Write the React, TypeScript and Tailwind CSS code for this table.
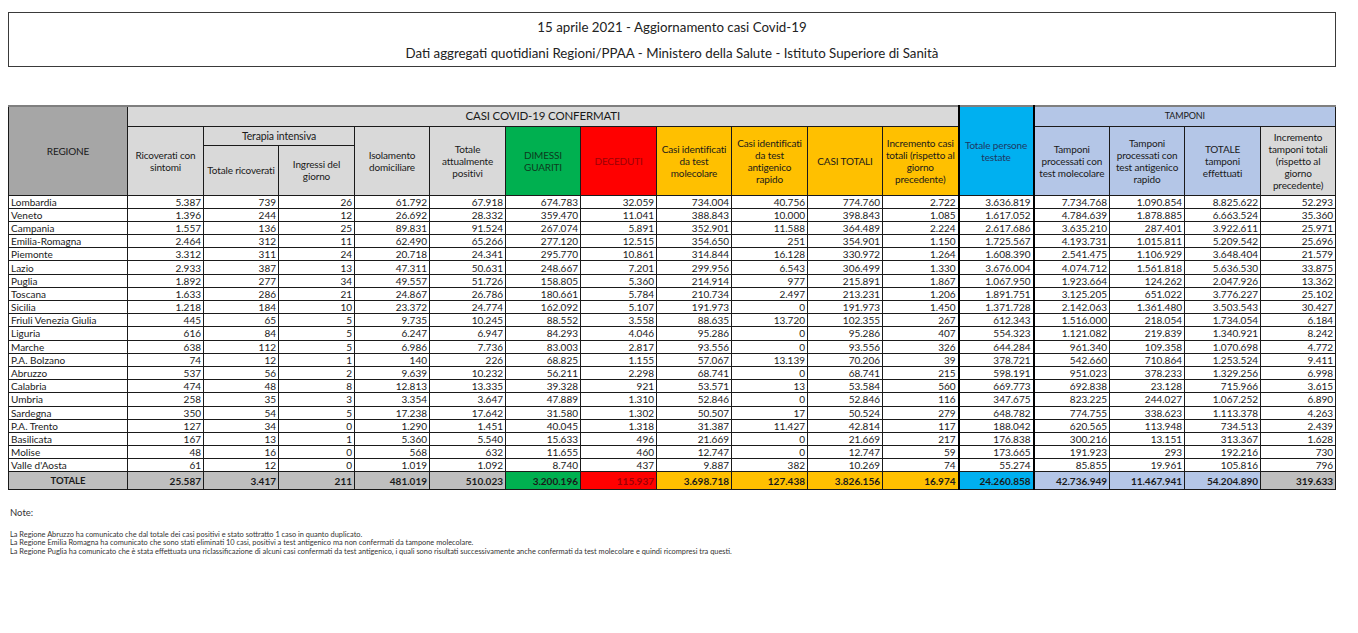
import React from "react";

type Row = [string, ...string[]];

const rows: Row[] = [
  ["Lombardia", "5.387", "739", "26", "61.792", "67.918", "674.783", "32.059", "734.004", "40.756", "774.760", "2.722", "3.636.819", "7.734.768", "1.090.854", "8.825.622", "52.293"],
  ["Veneto", "1.396", "244", "12", "26.692", "28.332", "359.470", "11.041", "388.843", "10.000", "398.843", "1.085", "1.617.052", "4.784.639", "1.878.885", "6.663.524", "35.360"],
  ["Campania", "1.557", "136", "25", "89.831", "91.524", "267.074", "5.891", "352.901", "11.588", "364.489", "2.224", "2.617.686", "3.635.210", "287.401", "3.922.611", "25.971"],
  ["Emilia-Romagna", "2.464", "312", "11", "62.490", "65.266", "277.120", "12.515", "354.650", "251", "354.901", "1.150", "1.725.567", "4.193.731", "1.015.811", "5.209.542", "25.696"],
  ["Piemonte", "3.312", "311", "24", "20.718", "24.341", "295.770", "10.861", "314.844", "16.128", "330.972", "1.264", "1.608.390", "2.541.475", "1.106.929", "3.648.404", "21.579"],
  ["Lazio", "2.933", "387", "13", "47.311", "50.631", "248.667", "7.201", "299.956", "6.543", "306.499", "1.330", "3.676.004", "4.074.712", "1.561.818", "5.636.530", "33.875"],
  ["Puglia", "1.892", "277", "34", "49.557", "51.726", "158.805", "5.360", "214.914", "977", "215.891", "1.867", "1.067.950", "1.923.664", "124.262", "2.047.926", "13.362"],
  ["Toscana", "1.633", "286", "21", "24.867", "26.786", "180.661", "5.784", "210.734", "2.497", "213.231", "1.206", "1.891.751", "3.125.205", "651.022", "3.776.227", "25.102"],
  ["Sicilia", "1.218", "184", "10", "23.372", "24.774", "162.092", "5.107", "191.973", "0", "191.973", "1.450", "1.371.728", "2.142.063", "1.361.480", "3.503.543", "30.427"],
  ["Friuli Venezia Giulia", "445", "65", "5", "9.735", "10.245", "88.552", "3.558", "88.635", "13.720", "102.355", "267", "612.343", "1.516.000", "218.054", "1.734.054", "6.184"],
  ["Liguria", "616", "84", "5", "6.247", "6.947", "84.293", "4.046", "95.286", "0", "95.286", "407", "554.323", "1.121.082", "219.839", "1.340.921", "8.242"],
  ["Marche", "638", "112", "5", "6.986", "7.736", "83.003", "2.817", "93.556", "0", "93.556", "326", "644.284", "961.340", "109.358", "1.070.698", "4.772"],
  ["P.A. Bolzano", "74", "12", "1", "140", "226", "68.825", "1.155", "57.067", "13.139", "70.206", "39", "378.721", "542.660", "710.864", "1.253.524", "9.411"],
  ["Abruzzo", "537", "56", "2", "9.639", "10.232", "56.211", "2.298", "68.741", "0", "68.741", "215", "598.191", "951.023", "378.233", "1.329.256", "6.998"],
  ["Calabria", "474", "48", "8", "12.813", "13.335", "39.328", "921", "53.571", "13", "53.584", "560", "669.773", "692.838", "23.128", "715.966", "3.615"],
  ["Umbria", "258", "35", "3", "3.354", "3.647", "47.889", "1.310", "52.846", "0", "52.846", "116", "347.675", "823.225", "244.027", "1.067.252", "6.890"],
  ["Sardegna", "350", "54", "5", "17.238", "17.642", "31.580", "1.302", "50.507", "17", "50.524", "279", "648.782", "774.755", "338.623", "1.113.378", "4.263"],
  ["P.A. Trento", "127", "34", "0", "1.290", "1.451", "40.045", "1.318", "31.387", "11.427", "42.814", "117", "188.042", "620.565", "113.948", "734.513", "2.439"],
  ["Basilicata", "167", "13", "1", "5.360", "5.540", "15.633", "496", "21.669", "0", "21.669", "217", "176.838", "300.216", "13.151", "313.367", "1.628"],
  ["Molise", "48", "16", "0", "568", "632", "11.655", "460", "12.747", "0", "12.747", "59", "173.665", "191.923", "293", "192.216", "730"],
  ["Valle d'Aosta", "61", "12", "0", "1.019", "1.092", "8.740", "437", "9.887", "382", "10.269", "74", "55.274", "85.855", "19.961", "105.816", "796"],
];

const totals = ["25.587", "3.417", "211", "481.019", "510.023", "3.200.196", "115.937", "3.698.718", "127.438", "3.826.156", "16.974", "24.260.858", "42.736.949", "11.467.941", "54.204.890", "319.633"];

// background of each column in the TOTALE row
const totalBg = [
  "bg-[#bfbfbf]", "bg-[#bfbfbf]", "bg-[#bfbfbf]", "bg-[#bfbfbf]", "bg-[#bfbfbf]",
  "bg-[#00b050]", "bg-[#ff0000] text-[#9c0006]", "bg-[#ffc000]", "bg-[#ffc000]", "bg-[#ffc000]", "bg-[#ffc000]",
  "bg-[#00b0f0]", "bg-[#b4c6e7]", "bg-[#b4c6e7]", "bg-[#b4c6e7]", "bg-[#bfbfbf]",
];

const colWidths = [119, 76, 75, 76, 75, 76, 75, 76, 75, 76, 75, 76, 75, 76, 75, 76, 75];

const th = "border border-[#1a1a1a] px-0 text-center align-middle font-normal leading-[12px] tracking-[-0.15px]";

export default function App() {
  return (
    <div
      className="w-[1358px] h-[633px] bg-white text-[#1a1a1a] pt-[12px]"
      style={{ fontFamily: "Lato, 'Open Sans', sans-serif" }}
    >
      <div className="mx-[8px] w-[1328px] h-[55px] border border-[#3a3a3a] flex flex-col items-center text-[13.3px] text-[#222]">
        <div className="mt-[6px] leading-[16px]">15 aprile 2021 - Aggiornamento casi Covid-19</div>
        <div className="mt-[10px] leading-[16px]">
          Dati aggregati quotidiani Regioni/PPAA - Ministero della Salute - Istituto Superiore di Sanità
        </div>
      </div>

      <table className="ml-[8px] mt-[38px] table-fixed border-collapse text-[10px] w-[1327px]">
        <colgroup>
          {colWidths.map((w, i) => (
            <col key={i} style={{ width: w }} />
          ))}
        </colgroup>
        <thead>
          <tr className="h-[20px] border-t-2 border-t-[#7f7f7f]">
            <th rowSpan={3} className={`${th} bg-[#a6a6a6] font-bold`}>REGIONE</th>
            <th colSpan={11} className={`${th} bg-[#d9d9d9] font-bold text-[11.5px]`}>CASI COVID-19 CONFERMATI</th>
            <th rowSpan={3} className={`${th} bg-[#00b0f0] text-[#1f3864] border-x-2 border-x-black`}>
              Totale persone
              <br />
              testate
            </th>
            <th colSpan={4} className={`${th} bg-[#b4c6e7] font-bold text-[9px]`}>TAMPONI</th>
          </tr>
          <tr className="h-[19px]">
            <th rowSpan={2} className={`${th} bg-[#d9d9d9]`}>Ricoverati con<br />sintomi</th>
            <th colSpan={2} className={`${th} bg-[#d9d9d9] text-[10.5px]`}>Terapia intensiva</th>
            <th rowSpan={2} className={`${th} bg-[#d9d9d9]`}>Isolamento<br />domiciliare</th>
            <th rowSpan={2} className={`${th} bg-[#d9d9d9]`}>Totale<br />attualmente<br />positivi</th>
            <th rowSpan={2} className={`${th} bg-[#00b050] text-[#0d3b1e]`}>DIMESSI<br />GUARITI</th>
            <th rowSpan={2} className={`${th} bg-[#ff0000] text-[#9c0006]`}>DECEDUTI</th>
            <th rowSpan={2} className={`${th} bg-[#ffc000]`}>Casi identificati<br />da test<br />molecolare</th>
            <th rowSpan={2} className={`${th} bg-[#ffc000]`}>Casi identificati<br />da test<br />antigenico<br />rapido</th>
            <th rowSpan={2} className={`${th} bg-[#ffc000]`}>CASI TOTALI</th>
            <th rowSpan={2} className={`${th} bg-[#ffc000] whitespace-nowrap`}>Incremento casi<br />totali (rispetto al<br />giorno<br />precedente)</th>
            <th rowSpan={2} className={`${th} bg-[#b4c6e7]`}>Tamponi<br />processati con<br />test molecolare</th>
            <th rowSpan={2} className={`${th} bg-[#b4c6e7]`}>Tamponi<br />processati con<br />test antigenico<br />rapido</th>
            <th rowSpan={2} className={`${th} bg-[#b4c6e7]`}>TOTALE<br />tamponi<br />effettuati</th>
            <th rowSpan={2} className={`${th} bg-[#d9d9d9]`}>Incremento<br />tamponi totali<br />(rispetto al<br />giorno<br />precedente)</th>
          </tr>
          <tr className="h-[50px]">
            <th className={`${th} bg-[#d9d9d9] whitespace-nowrap`}>Totale ricoverati</th>
            <th className={`${th} bg-[#d9d9d9]`}>Ingressi del<br />giorno</th>
          </tr>
        </thead>
        <tbody>
          {rows.map((r) => (
            <tr key={r[0]} className="h-[13.2px]">
              {r.map((v, i) => (
                <td
                  key={i}
                  className={`border border-[#1a1a1a] px-[2px] py-0 leading-[12px] whitespace-nowrap ${
                    i === 0 ? "text-left" : "text-right"
                  } ${i === 12 ? "border-x-2 border-x-black" : ""}`}
                >
                  {v}
                </td>
              ))}
            </tr>
          ))}
          <tr className="h-[18px] font-bold">
            <td className="border border-[#1a1a1a] bg-[#bfbfbf] text-center text-[9.5px]">TOTALE</td>
            {totals.map((v, i) => (
              <td
                key={i}
                className={`border border-[#1a1a1a] px-[2px] text-right leading-[12px] ${totalBg[i]} ${
                  i === 11 ? "border-x-2 border-x-black" : ""
                }`}
              >
                {v}
              </td>
            ))}
          </tr>
        </tbody>
      </table>

      <div className="ml-[10px] mt-[16px] text-[9.5px] text-[#333]">Note:</div>
      <div className="ml-[10px] mt-[10px] text-[7.4px] leading-[8.5px] text-[#333]">
        <div>La Regione Abruzzo ha comunicato che dal totale dei casi positivi e stato sottratto 1 caso in quanto duplicato.</div>
        <div>La Regione Emilia Romagna ha comunicato che sono stati eliminati 10 casi, positivi a test antigenico ma non confermati da tampone molecolare.</div>
        <div>
          La Regione Puglia ha comunicato che è stata effettuata una riclassificazione di alcuni casi confermati da test antigenico, i quali sono risultati successivamente anche confermati da test molecolare e quindi ricompresi tra questi.
        </div>
      </div>
    </div>
  );
}
